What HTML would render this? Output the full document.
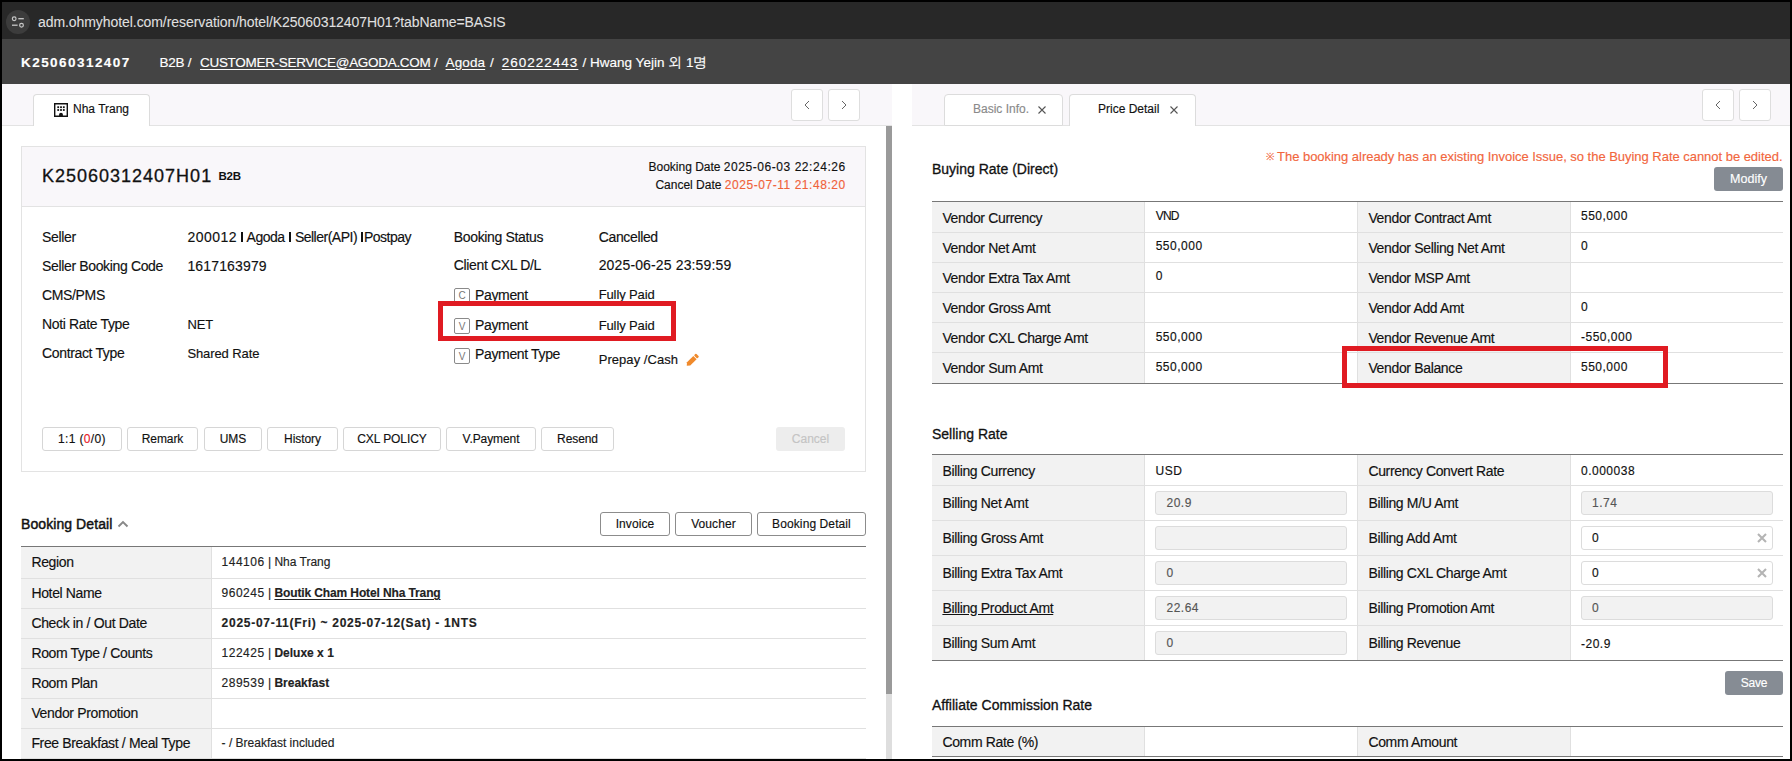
<!DOCTYPE html><html><head><meta charset="utf-8"><style>
*{margin:0;padding:0;box-sizing:border-box}
html,body{width:1792px;height:761px;overflow:hidden;background:#000}
body{position:relative;font-family:"Liberation Sans",sans-serif;color:#111}
.t{position:absolute;line-height:1;white-space:nowrap;-webkit-text-stroke:0.15px currentColor}
.n{letter-spacing:0.5px}
u{text-decoration:underline;text-underline-offset:2px}
</style></head><body>
<div style="position:absolute;left:2px;top:2px;width:1788px;height:37px;background:#282828"></div>
<div style="position:absolute;left:6px;top:10px;width:24px;height:24px;background:#3c3c3c;border-radius:50%"></div>
<svg style="position:absolute;left:6px;top:10px" width="24" height="24" viewBox="0 0 24 24">
<circle cx="8.2" cy="8.7" r="1.85" fill="none" stroke="#c8c8c8" stroke-width="1.2"/>
<line x1="12.3" y1="8.7" x2="17.8" y2="8.7" stroke="#c8c8c8" stroke-width="1.3"/>
<line x1="6" y1="15.2" x2="11.6" y2="15.2" stroke="#c8c8c8" stroke-width="1.3"/>
<circle cx="15.5" cy="15.2" r="1.85" fill="none" stroke="#c8c8c8" stroke-width="1.2"/>
</svg>
<div class="t" style="left:38px;top:15.15px;font-size:14px;font-weight:400;color:#e0e0e0;letter-spacing:-0.07px;-webkit-text-stroke:0.05px #e0e0e0">adm.ohmyhotel.com/reservation/hotel/K25060312407H01?tabName=BASIS</div>
<div style="position:absolute;left:2px;top:39px;width:1788px;height:45px;background:#444444"></div>
<div class="t" style="left:21px;top:55.57px;font-size:13.5px;font-weight:700;color:#fff;letter-spacing:1.45px;">K25060312407</div>
<div class="t" style="left:159.6px;top:55.57px;font-size:13.5px;font-weight:400;color:#fff;letter-spacing:-0.3px;">B2B /</div>
<div class="t" style="left:200px;top:55.57px;font-size:13.5px;font-weight:400;color:#fff;letter-spacing:-0.3px;"><u>CUSTOMER-SERVICE@AGODA.COM</u></div>
<div class="t" style="left:434px;top:55.57px;font-size:13.5px;font-weight:400;color:#fff;letter-spacing:-0.3px;">/</div>
<div class="t" style="left:445.6px;top:55.57px;font-size:13.5px;font-weight:400;color:#fff;letter-spacing:0.1px;"><u>Agoda</u></div>
<div class="t" style="left:490px;top:55.57px;font-size:13.5px;font-weight:400;color:#fff;letter-spacing:-0.3px;">/</div>
<div class="t" style="left:501.8px;top:55.57px;font-size:13.5px;font-weight:400;color:#fff;letter-spacing:1.0px;"><u>260222443</u></div>
<div class="t" style="left:582.6px;top:55.57px;font-size:13.5px;font-weight:400;color:#fff;">/ Hwang Yejin 외 1명</div>
<div style="position:absolute;left:2px;top:84px;width:1788px;height:675px;background:#fff"></div>
<div style="position:absolute;left:2px;top:84px;width:890px;height:42px;background:#f9f7fa;border-bottom:1px solid #e3e3e3"></div>
<div style="position:absolute;left:33px;top:94px;width:117px;height:32px;background:#fff;border:1px solid #dcdcdc;border-bottom:none;border-radius:4px 4px 0 0"></div>
<svg style="position:absolute;left:54px;top:103px" width="14" height="14" viewBox="0 0 14 14">
<path d="M0 0H14V14H0Z M1.4 1.4V12.6H5.1V11.6A1.9 1.9 0 0 1 8.9 11.6V12.6H12.6V1.4Z" fill="#111" fill-rule="evenodd"/>
<rect x="3.3" y="3.3" width="1.8" height="1.8" fill="#111"/><rect x="6.1" y="3.3" width="1.8" height="1.8" fill="#111"/><rect x="8.9" y="3.3" width="1.8" height="1.8" fill="#111"/>
<rect x="3.3" y="6.1" width="1.8" height="1.8" fill="#111"/><rect x="6.1" y="6.1" width="1.8" height="1.8" fill="#111"/><rect x="8.9" y="6.1" width="1.8" height="1.8" fill="#111"/>
</svg>
<div class="t" style="left:73px;top:102.84px;font-size:12px;font-weight:400;color:#111;">Nha Trang</div>
<div style="position:absolute;left:791px;top:89px;width:32px;height:32px;background:#fff;border:1px solid #dedede;border-radius:3px"></div>
<svg style="position:absolute;left:0;top:0" width="1792" height="761"><path d="M809.0 101.0 L805.0 105.0 L809.0 109.0" fill="none" stroke="#666" stroke-width="1"/></svg>
<div style="position:absolute;left:828px;top:89px;width:32px;height:32px;background:#fff;border:1px solid #dedede;border-radius:3px"></div>
<svg style="position:absolute;left:0;top:0" width="1792" height="761"><path d="M842.0 101.0 L846.0 105.0 L842.0 109.0" fill="none" stroke="#666" stroke-width="1"/></svg>
<div style="position:absolute;left:886px;top:126px;width:6px;height:568px;background:#9a9a9a"></div>
<div style="position:absolute;left:886px;top:694px;width:6px;height:65px;background:#dedede"></div>
<div style="position:absolute;left:21px;top:146px;width:845px;height:326px;border:1px solid #e3e3e3;background:#fff"></div>
<div style="position:absolute;left:22px;top:147px;width:843px;height:60px;background:#f9f7fa;border-bottom:1px solid #e3e3e3"></div>
<div class="t" style="left:42px;top:166.76px;font-size:18px;font-weight:400;color:#111;letter-spacing:1.0px;-webkit-text-stroke:0.3px #111">K25060312407H01</div>
<div class="t" style="left:218.5px;top:170.57px;font-size:11.5px;font-weight:700;color:#111;letter-spacing:-0.2px;-webkit-text-stroke:0px">B2B</div>
<div class="t" style="right:946.8px;top:161.14px;font-size:12px;font-weight:400;color:#111;">Booking Date <span style="letter-spacing:0.55px">2025-06-03 22:24:2</span>6</div>
<div class="t" style="right:946.8px;top:179.24px;font-size:12px;font-weight:400;color:#111;">Cancel Date <span style="color:#f0623a"><span style="letter-spacing:0.55px">2025-07-11 21:48:2</span>0</span></div>
<div class="t" style="left:42px;top:229.85px;font-size:14px;font-weight:400;color:#111;letter-spacing:-0.35px;">Seller</div>
<div class="t" style="left:187.4px;top:229.85px;font-size:14px;font-weight:400;color:#111;letter-spacing:-0.5px;"><span style="letter-spacing:0.5px">200012</span> <span style="display:inline-block;width:2px;height:10px;margin:0 1.5px 0 0;background:#111;vertical-align:baseline"></span> Agoda <span style="display:inline-block;width:2px;height:10px;margin:0 0.5px 0 1px;background:#111;vertical-align:baseline"></span> Seller(API) <span style="display:inline-block;width:2px;height:10px;margin:0 0.5px 0 1px;background:#111;vertical-align:baseline"></span>Postpay</div>
<div class="t" style="left:42px;top:258.85px;font-size:14px;font-weight:400;color:#111;letter-spacing:-0.35px;">Seller Booking Code</div>
<div class="t" style="left:187.4px;top:258.85px;font-size:14px;font-weight:400;color:#111;letter-spacing:-0.35px;"><span style="letter-spacing:0.15px">1617163979</span></div>
<div class="t" style="left:42px;top:287.85px;font-size:14px;font-weight:400;color:#111;letter-spacing:-0.35px;">CMS/PMS</div>
<div class="t" style="left:42px;top:316.85px;font-size:14px;font-weight:400;color:#111;letter-spacing:-0.35px;">Noti Rate Type</div>
<div class="t" style="left:187.4px;top:317.70px;font-size:13px;font-weight:400;color:#111;letter-spacing:-0.1px;">NET</div>
<div class="t" style="left:42px;top:345.85px;font-size:14px;font-weight:400;color:#111;letter-spacing:-0.35px;">Contract Type</div>
<div class="t" style="left:187.4px;top:346.70px;font-size:13px;font-weight:400;color:#111;letter-spacing:-0.1px;">Shared Rate</div>
<div class="t" style="left:453.8px;top:229.55px;font-size:14px;font-weight:400;color:#111;letter-spacing:-0.35px;">Booking Status</div>
<div class="t" style="left:598.7px;top:229.55px;font-size:14px;font-weight:400;color:#111;letter-spacing:-0.35px;">Cancelled</div>
<div class="t" style="left:453.8px;top:258.35px;font-size:14px;font-weight:400;color:#111;letter-spacing:-0.35px;">Client CXL D/L</div>
<div class="t" style="left:598.7px;top:258.35px;font-size:14px;font-weight:400;color:#111;letter-spacing:0.14px;">2025-06-25 23:59:59</div>
<div style="position:absolute;left:454px;top:288px;width:16px;height:16px;border:1px solid #8a8a8a;border-radius:2px;background:#fff"></div>
<div class="t" style="left:454px;top:290.8px;width:16px;text-align:center;font-size:10px;color:#777;-webkit-text-stroke:0">C</div>
<div style="position:absolute;left:454px;top:318px;width:16px;height:16px;border:1px solid #8a8a8a;border-radius:2px;background:#fff"></div>
<div class="t" style="left:454px;top:322px;width:16px;text-align:center;font-size:10px;color:#777;-webkit-text-stroke:0">V</div>
<div style="position:absolute;left:454px;top:348px;width:16px;height:16px;border:1px solid #8a8a8a;border-radius:2px;background:#fff"></div>
<div class="t" style="left:454px;top:352px;width:16px;text-align:center;font-size:10px;color:#777;-webkit-text-stroke:0">V</div>
<div class="t" style="left:475px;top:288.45px;font-size:14px;font-weight:400;color:#111;letter-spacing:-0.35px;">Payment</div>
<div class="t" style="left:475px;top:317.75px;font-size:14px;font-weight:400;color:#111;letter-spacing:-0.35px;">Payment</div>
<div class="t" style="left:475px;top:347.15px;font-size:14px;font-weight:400;color:#111;letter-spacing:-0.35px;">Payment Type</div>
<div class="t" style="left:598.7px;top:287.90px;font-size:13px;font-weight:400;color:#111;letter-spacing:-0.12px;">Fully Paid</div>
<div class="t" style="left:598.7px;top:318.60px;font-size:13px;font-weight:400;color:#111;letter-spacing:-0.12px;">Fully Paid</div>
<div class="t" style="left:598.7px;top:352.80px;font-size:13px;font-weight:400;color:#111;letter-spacing:0.05px;">Prepay /Cash</div>
<svg style="position:absolute;left:684px;top:353px" width="16" height="15" viewBox="0 0 16 15">
<g transform="rotate(-45 8 7.5)"><path d="M0.6 7.5 L3.2 5.2 H12.2 V9.8 H3.2 Z" fill="#f08a2c"/><rect x="13" y="5.2" width="2.8" height="4.6" rx="0.9" fill="#f08a2c"/></g>
</svg>
<div style="position:absolute;left:42px;top:427px;width:80px;height:24px;border:1px solid #d6d6d6;border-radius:3px;background:#fff"></div>
<div class="t" style="left:42.0px;width:80px;text-align:center;top:433.04px;font-size:12px;font-weight:400;color:#111;letter-spacing:-0.08px;"><span style="letter-spacing:0.35px">1:1 (<span style="color:#e8202a">0</span>/0)</span></div>
<div style="position:absolute;left:127px;top:427px;width:71px;height:24px;border:1px solid #d6d6d6;border-radius:3px;background:#fff"></div>
<div class="t" style="left:127.0px;width:71px;text-align:center;top:433.04px;font-size:12px;font-weight:400;color:#111;letter-spacing:-0.08px;">Remark</div>
<div style="position:absolute;left:204px;top:427px;width:58px;height:24px;border:1px solid #d6d6d6;border-radius:3px;background:#fff"></div>
<div class="t" style="left:204.0px;width:58px;text-align:center;top:433.04px;font-size:12px;font-weight:400;color:#111;letter-spacing:-0.08px;">UMS</div>
<div style="position:absolute;left:267px;top:427px;width:71px;height:24px;border:1px solid #d6d6d6;border-radius:3px;background:#fff"></div>
<div class="t" style="left:267.0px;width:71px;text-align:center;top:433.04px;font-size:12px;font-weight:400;color:#111;letter-spacing:-0.08px;">History</div>
<div style="position:absolute;left:343px;top:427px;width:98px;height:24px;border:1px solid #d6d6d6;border-radius:3px;background:#fff"></div>
<div class="t" style="left:343.0px;width:98px;text-align:center;top:433.04px;font-size:12px;font-weight:400;color:#111;letter-spacing:-0.08px;">CXL POLICY</div>
<div style="position:absolute;left:446px;top:427px;width:90px;height:24px;border:1px solid #d6d6d6;border-radius:3px;background:#fff"></div>
<div class="t" style="left:446.0px;width:90px;text-align:center;top:433.04px;font-size:12px;font-weight:400;color:#111;letter-spacing:-0.08px;">V.Payment</div>
<div style="position:absolute;left:541px;top:427px;width:73px;height:24px;border:1px solid #d6d6d6;border-radius:3px;background:#fff"></div>
<div class="t" style="left:541.0px;width:73px;text-align:center;top:433.04px;font-size:12px;font-weight:400;color:#111;letter-spacing:-0.08px;">Resend</div>
<div style="position:absolute;left:776px;top:427px;width:69px;height:24px;background:#ededed;border-radius:3px"></div>
<div class="t" style="left:776.0px;width:69px;text-align:center;top:433.04px;font-size:12px;font-weight:400;color:#c4c4c4;">Cancel</div>
<div class="t" style="left:21px;top:517.15px;font-size:14px;font-weight:400;color:#111;letter-spacing:0.08px;-webkit-text-stroke:0.45px #111">Booking Detail</div>
<svg style="position:absolute;left:117px;top:519px" width="12" height="10" viewBox="0 0 12 10"><path d="M1.5 7.5 L6 3 L10.5 7.5" fill="none" stroke="#888" stroke-width="1.9"/></svg>
<div style="position:absolute;left:600px;top:512px;width:70px;height:24px;border:1px solid #8c8c8c;border-radius:3px;background:#fff"></div>
<div class="t" style="left:600.0px;width:70px;text-align:center;top:518.14px;font-size:12px;font-weight:400;color:#111;letter-spacing:0.1px;">Invoice</div>
<div style="position:absolute;left:675px;top:512px;width:77px;height:24px;border:1px solid #8c8c8c;border-radius:3px;background:#fff"></div>
<div class="t" style="left:675.0px;width:77px;text-align:center;top:518.14px;font-size:12px;font-weight:400;color:#111;letter-spacing:0.1px;">Voucher</div>
<div style="position:absolute;left:757px;top:512px;width:109px;height:24px;border:1px solid #8c8c8c;border-radius:3px;background:#fff"></div>
<div class="t" style="left:757.0px;width:109px;text-align:center;top:518.14px;font-size:12px;font-weight:400;color:#111;letter-spacing:0.1px;">Booking Detail</div>
<div style="position:absolute;left:21px;top:546px;width:845px;height:1px;background:#777"></div>
<div style="position:absolute;left:21px;top:547px;width:190px;height:32px;background:#f2f2f2"></div>
<div style="position:absolute;left:21px;top:578px;width:845px;height:1px;background:#e0e0e0"></div>
<div style="position:absolute;left:21px;top:579px;width:190px;height:30px;background:#f2f2f2"></div>
<div style="position:absolute;left:21px;top:608px;width:845px;height:1px;background:#e0e0e0"></div>
<div style="position:absolute;left:21px;top:609px;width:190px;height:30px;background:#f2f2f2"></div>
<div style="position:absolute;left:21px;top:638px;width:845px;height:1px;background:#e0e0e0"></div>
<div style="position:absolute;left:21px;top:639px;width:190px;height:30px;background:#f2f2f2"></div>
<div style="position:absolute;left:21px;top:668px;width:845px;height:1px;background:#e0e0e0"></div>
<div style="position:absolute;left:21px;top:669px;width:190px;height:30px;background:#f2f2f2"></div>
<div style="position:absolute;left:21px;top:698px;width:845px;height:1px;background:#e0e0e0"></div>
<div style="position:absolute;left:21px;top:699px;width:190px;height:30px;background:#f2f2f2"></div>
<div style="position:absolute;left:21px;top:728px;width:845px;height:1px;background:#e0e0e0"></div>
<div style="position:absolute;left:21px;top:729px;width:190px;height:30px;background:#f2f2f2"></div>
<div style="position:absolute;left:211px;top:547px;width:1px;height:212px;background:#e0e0e0"></div>
<div style="position:absolute;left:21px;top:758px;width:845px;height:1px;background:#e0e0e0"></div>
<div class="t" style="left:31.4px;top:554.95px;font-size:14px;font-weight:400;color:#111;letter-spacing:-0.35px;">Region</div>
<div class="t" style="left:221.6px;top:555.64px;font-size:12px;font-weight:400;color:#222;"><span class="n">144106</span> | Nha Trang</div>
<div class="t" style="left:31.4px;top:586.35px;font-size:14px;font-weight:400;color:#111;letter-spacing:-0.35px;">Hotel Name</div>
<div class="t" style="left:221.6px;top:587.04px;font-size:12px;font-weight:400;color:#222;"><span class="n">960245</span> | <b style="letter-spacing:-0.12px"><u>Boutik Cham Hotel Nha Trang</u></b></div>
<div class="t" style="left:31.4px;top:615.85px;font-size:14px;font-weight:400;color:#111;letter-spacing:-0.35px;">Check in / Out Date</div>
<div class="t" style="left:221.6px;top:616.54px;font-size:12px;font-weight:400;color:#222;"><b style="letter-spacing:0.72px">2025-07-11(Fri) ~ 2025-07-12(Sat) - 1NTS</b></div>
<div class="t" style="left:31.4px;top:646.35px;font-size:14px;font-weight:400;color:#111;letter-spacing:-0.35px;">Room Type / Counts</div>
<div class="t" style="left:221.6px;top:647.04px;font-size:12px;font-weight:400;color:#222;"><span class="n">122425</span> | <b>Deluxe x 1</b></div>
<div class="t" style="left:31.4px;top:676.35px;font-size:14px;font-weight:400;color:#111;letter-spacing:-0.35px;">Room Plan</div>
<div class="t" style="left:221.6px;top:677.04px;font-size:12px;font-weight:400;color:#222;"><span class="n">289539</span> | <b>Breakfast</b></div>
<div class="t" style="left:31.4px;top:706.05px;font-size:14px;font-weight:400;color:#111;letter-spacing:-0.35px;">Vendor Promotion</div>
<div class="t" style="left:31.4px;top:735.95px;font-size:14px;font-weight:400;color:#111;letter-spacing:-0.35px;">Free Breakfast / Meal Type</div>
<div class="t" style="left:221.6px;top:736.64px;font-size:12px;font-weight:400;color:#222;">- / Breakfast included</div>
<div style="position:absolute;left:912px;top:84px;width:878px;height:675px;background:#fff"></div>
<div style="position:absolute;left:912px;top:84px;width:878px;height:42px;background:#f9f7fa;border-bottom:1px solid #e3e3e3"></div>
<div style="position:absolute;left:944px;top:94px;width:119px;height:32px;background:#fff;border:1px solid #dcdcdc;border-radius:4px 4px 0 0"></div>
<div class="t" style="left:973px;top:102.84px;font-size:12px;font-weight:400;color:#8a8a8a;">Basic Info.</div>
<svg style="position:absolute;left:1037px;top:105px" width="10" height="10" viewBox="0 0 10 10"><path d="M1.5 1.5 L8.5 8.5 M8.5 1.5 L1.5 8.5" stroke="#555" stroke-width="1.1"/></svg>
<div style="position:absolute;left:1069px;top:94px;width:127px;height:32px;background:#fff;border:1px solid #dcdcdc;border-bottom:none;border-radius:4px 4px 0 0"></div>
<div class="t" style="left:1098px;top:102.84px;font-size:12px;font-weight:400;color:#111;">Price Detail</div>
<svg style="position:absolute;left:1169px;top:105px" width="10" height="10" viewBox="0 0 10 10"><path d="M1.5 1.5 L8.5 8.5 M8.5 1.5 L1.5 8.5" stroke="#555" stroke-width="1.1"/></svg>
<div style="position:absolute;left:1702px;top:89px;width:32px;height:32px;background:#fff;border:1px solid #dedede;border-radius:3px"></div>
<svg style="position:absolute;left:0;top:0" width="1792" height="761"><path d="M1720.0 101.0 L1716.0 105.0 L1720.0 109.0" fill="none" stroke="#666" stroke-width="1"/></svg>
<div style="position:absolute;left:1739px;top:89px;width:32px;height:32px;background:#fff;border:1px solid #dedede;border-radius:3px"></div>
<svg style="position:absolute;left:0;top:0" width="1792" height="761"><path d="M1753.0 101.0 L1757.0 105.0 L1753.0 109.0" fill="none" stroke="#666" stroke-width="1"/></svg>
<div class="t" style="left:932px;top:161.55px;font-size:14px;font-weight:400;color:#111;-webkit-text-stroke:0.3px #111">Buying Rate (Direct)</div>
<div class="t" style="right:9.5px;top:149.80px;font-size:13px;font-weight:400;color:#f2663d;letter-spacing:-0.03px;"><span style="font-size:10px;vertical-align:1px">※</span> The booking already has an existing Invoice Issue, so the Buying Rate cannot be edited.</div>
<div style="position:absolute;left:1714px;top:167px;width:69px;height:24px;background:#858b93;border-radius:3px"></div>
<div class="t" style="left:1714.0px;width:69px;text-align:center;top:172.92px;font-size:12.5px;font-weight:400;color:#fff;">Modify</div>
<div style="position:absolute;left:932px;top:201px;width:851px;height:1px;background:#777"></div>
<div style="position:absolute;left:932px;top:202px;width:212px;height:31px;background:#f2f2f2"></div>
<div style="position:absolute;left:1358px;top:202px;width:213px;height:31px;background:#f2f2f2"></div>
<div style="position:absolute;left:932px;top:232px;width:851px;height:1px;background:#e0e0e0"></div>
<div style="position:absolute;left:932px;top:233px;width:212px;height:30px;background:#f2f2f2"></div>
<div style="position:absolute;left:1358px;top:233px;width:213px;height:30px;background:#f2f2f2"></div>
<div style="position:absolute;left:932px;top:262px;width:851px;height:1px;background:#e0e0e0"></div>
<div style="position:absolute;left:932px;top:263px;width:212px;height:30px;background:#f2f2f2"></div>
<div style="position:absolute;left:1358px;top:263px;width:213px;height:30px;background:#f2f2f2"></div>
<div style="position:absolute;left:932px;top:292px;width:851px;height:1px;background:#e0e0e0"></div>
<div style="position:absolute;left:932px;top:293px;width:212px;height:30px;background:#f2f2f2"></div>
<div style="position:absolute;left:1358px;top:293px;width:213px;height:30px;background:#f2f2f2"></div>
<div style="position:absolute;left:932px;top:322px;width:851px;height:1px;background:#e0e0e0"></div>
<div style="position:absolute;left:932px;top:323px;width:212px;height:30px;background:#f2f2f2"></div>
<div style="position:absolute;left:1358px;top:323px;width:213px;height:30px;background:#f2f2f2"></div>
<div style="position:absolute;left:932px;top:352px;width:851px;height:1px;background:#e0e0e0"></div>
<div style="position:absolute;left:932px;top:353px;width:212px;height:31px;background:#f2f2f2"></div>
<div style="position:absolute;left:1358px;top:353px;width:213px;height:31px;background:#f2f2f2"></div>
<div style="position:absolute;left:932px;top:383px;width:851px;height:1px;background:#777"></div>
<div style="position:absolute;left:1144px;top:202px;width:1px;height:181px;background:#e0e0e0"></div>
<div style="position:absolute;left:1357px;top:202px;width:1px;height:181px;background:#e0e0e0"></div>
<div style="position:absolute;left:1570px;top:202px;width:1px;height:181px;background:#e0e0e0"></div>
<div class="t" style="left:942.4px;top:210.75px;font-size:14px;font-weight:400;color:#111;letter-spacing:-0.35px;">Vendor Currency</div>
<div class="t" style="left:1368.4px;top:210.75px;font-size:14px;font-weight:400;color:#111;letter-spacing:-0.35px;">Vendor Contract Amt</div>
<div class="t" style="left:1155.7px;top:209.94px;font-size:12px;font-weight:400;color:#111;letter-spacing:-0.8px;">VND</div>
<div class="t" style="left:1581px;top:209.94px;font-size:12px;font-weight:400;color:#111;"><span class="n">550,000</span></div>
<div class="t" style="left:942.4px;top:240.75px;font-size:14px;font-weight:400;color:#111;letter-spacing:-0.35px;">Vendor Net Amt</div>
<div class="t" style="left:1368.4px;top:240.75px;font-size:14px;font-weight:400;color:#111;letter-spacing:-0.35px;">Vendor Selling Net Amt</div>
<div class="t" style="left:1155.7px;top:240.19px;font-size:12px;font-weight:400;color:#111;"><span class="n">550,000</span></div>
<div class="t" style="left:1581px;top:240.19px;font-size:12px;font-weight:400;color:#111;"><span class="n">0</span></div>
<div class="t" style="left:942.4px;top:270.75px;font-size:14px;font-weight:400;color:#111;letter-spacing:-0.35px;">Vendor Extra Tax Amt</div>
<div class="t" style="left:1368.4px;top:270.75px;font-size:14px;font-weight:400;color:#111;letter-spacing:-0.35px;">Vendor MSP Amt</div>
<div class="t" style="left:1155.7px;top:270.44px;font-size:12px;font-weight:400;color:#111;"><span class="n">0</span></div>
<div class="t" style="left:942.4px;top:300.75px;font-size:14px;font-weight:400;color:#111;letter-spacing:-0.35px;">Vendor Gross Amt</div>
<div class="t" style="left:1368.4px;top:300.75px;font-size:14px;font-weight:400;color:#111;letter-spacing:-0.35px;">Vendor Add Amt</div>
<div class="t" style="left:1581px;top:300.69px;font-size:12px;font-weight:400;color:#111;"><span class="n">0</span></div>
<div class="t" style="left:942.4px;top:330.75px;font-size:14px;font-weight:400;color:#111;letter-spacing:-0.35px;">Vendor CXL Charge Amt</div>
<div class="t" style="left:1368.4px;top:330.75px;font-size:14px;font-weight:400;color:#111;letter-spacing:-0.35px;">Vendor Revenue Amt</div>
<div class="t" style="left:1155.7px;top:330.94px;font-size:12px;font-weight:400;color:#111;"><span class="n">550,000</span></div>
<div class="t" style="left:1581px;top:330.94px;font-size:12px;font-weight:400;color:#111;"><span class="n">-550,000</span></div>
<div class="t" style="left:942.4px;top:360.75px;font-size:14px;font-weight:400;color:#111;letter-spacing:-0.35px;">Vendor Sum Amt</div>
<div class="t" style="left:1368.4px;top:360.75px;font-size:14px;font-weight:400;color:#111;letter-spacing:-0.35px;">Vendor Balance</div>
<div class="t" style="left:1155.7px;top:361.19px;font-size:12px;font-weight:400;color:#111;"><span class="n">550,000</span></div>
<div class="t" style="left:1581px;top:361.19px;font-size:12px;font-weight:400;color:#111;"><span class="n">550,000</span></div>
<div class="t" style="left:932px;top:427.15px;font-size:14px;font-weight:400;color:#111;-webkit-text-stroke:0.3px #111">Selling Rate</div>
<div style="position:absolute;left:932px;top:454px;width:851px;height:1px;background:#777"></div>
<div style="position:absolute;left:932px;top:455px;width:212px;height:31px;background:#f2f2f2"></div>
<div style="position:absolute;left:1358px;top:455px;width:213px;height:31px;background:#f2f2f2"></div>
<div style="position:absolute;left:932px;top:485px;width:851px;height:1px;background:#e0e0e0"></div>
<div style="position:absolute;left:932px;top:486px;width:212px;height:35px;background:#f2f2f2"></div>
<div style="position:absolute;left:1358px;top:486px;width:213px;height:35px;background:#f2f2f2"></div>
<div style="position:absolute;left:932px;top:520px;width:851px;height:1px;background:#e0e0e0"></div>
<div style="position:absolute;left:932px;top:521px;width:212px;height:35px;background:#f2f2f2"></div>
<div style="position:absolute;left:1358px;top:521px;width:213px;height:35px;background:#f2f2f2"></div>
<div style="position:absolute;left:932px;top:555px;width:851px;height:1px;background:#e0e0e0"></div>
<div style="position:absolute;left:932px;top:556px;width:212px;height:35px;background:#f2f2f2"></div>
<div style="position:absolute;left:1358px;top:556px;width:213px;height:35px;background:#f2f2f2"></div>
<div style="position:absolute;left:932px;top:590px;width:851px;height:1px;background:#e0e0e0"></div>
<div style="position:absolute;left:932px;top:591px;width:212px;height:35px;background:#f2f2f2"></div>
<div style="position:absolute;left:1358px;top:591px;width:213px;height:35px;background:#f2f2f2"></div>
<div style="position:absolute;left:932px;top:625px;width:851px;height:1px;background:#e0e0e0"></div>
<div style="position:absolute;left:932px;top:626px;width:212px;height:35px;background:#f2f2f2"></div>
<div style="position:absolute;left:1358px;top:626px;width:213px;height:35px;background:#f2f2f2"></div>
<div style="position:absolute;left:932px;top:660px;width:851px;height:1px;background:#777"></div>
<div style="position:absolute;left:1144px;top:455px;width:1px;height:205px;background:#e0e0e0"></div>
<div style="position:absolute;left:1357px;top:455px;width:1px;height:205px;background:#e0e0e0"></div>
<div style="position:absolute;left:1570px;top:455px;width:1px;height:205px;background:#e0e0e0"></div>
<div class="t" style="left:942.4px;top:463.65px;font-size:14px;font-weight:400;color:#111;letter-spacing:-0.35px;">Billing Currency</div>
<div class="t" style="left:1368.4px;top:463.65px;font-size:14px;font-weight:400;color:#111;letter-spacing:-0.35px;">Currency Convert Rate</div>
<div class="t" style="left:1155.5px;top:464.84px;font-size:12px;font-weight:400;color:#111;"><span class="n">USD</span></div>
<div class="t" style="left:1581px;top:464.84px;font-size:12px;font-weight:400;color:#111;"><span class="n">0.000038</span></div>
<div class="t" style="left:942.4px;top:495.65px;font-size:14px;font-weight:400;color:#111;letter-spacing:-0.35px;">Billing Net Amt</div>
<div class="t" style="left:1368.4px;top:495.65px;font-size:14px;font-weight:400;color:#111;letter-spacing:-0.35px;">Billing M/U Amt</div>
<div style="position:absolute;left:1155.0px;top:491px;width:192px;height:24px;background:#f2f2f2;border:1px solid #dcdcdc;border-radius:3px"></div>
<div class="t" style="left:1166.5px;top:496.84px;font-size:12px;font-weight:400;color:#555;"><span class="n">20.9</span></div>
<div style="position:absolute;left:1580.5px;top:491px;width:192px;height:24px;background:#f2f2f2;border:1px solid #dcdcdc;border-radius:3px"></div>
<div class="t" style="left:1592px;top:496.84px;font-size:12px;font-weight:400;color:#555;"><span class="n">1.74</span></div>
<div class="t" style="left:942.4px;top:530.65px;font-size:14px;font-weight:400;color:#111;letter-spacing:-0.35px;">Billing Gross Amt</div>
<div class="t" style="left:1368.4px;top:530.65px;font-size:14px;font-weight:400;color:#111;letter-spacing:-0.35px;">Billing Add Amt</div>
<div style="position:absolute;left:1155.0px;top:526px;width:192px;height:24px;background:#f2f2f2;border:1px solid #dcdcdc;border-radius:3px"></div>
<div style="position:absolute;left:1580.5px;top:526px;width:192px;height:24px;background:#fff;border:1px solid #dcdcdc;border-radius:3px"></div>
<div class="t" style="left:1592px;top:531.84px;font-size:12px;font-weight:400;color:#111;"><span class="n">0</span></div>
<svg style="position:absolute;left:1757px;top:533px" width="10" height="10" viewBox="0 0 10 10"><path d="M1 1 L9 9 M9 1 L1 9" stroke="#b4b4b4" stroke-width="2.1"/></svg>
<div class="t" style="left:942.4px;top:565.65px;font-size:14px;font-weight:400;color:#111;letter-spacing:-0.35px;">Billing Extra Tax Amt</div>
<div class="t" style="left:1368.4px;top:565.65px;font-size:14px;font-weight:400;color:#111;letter-spacing:-0.35px;">Billing CXL Charge Amt</div>
<div style="position:absolute;left:1155.0px;top:561px;width:192px;height:24px;background:#f2f2f2;border:1px solid #dcdcdc;border-radius:3px"></div>
<div class="t" style="left:1166.5px;top:566.84px;font-size:12px;font-weight:400;color:#555;"><span class="n">0</span></div>
<div style="position:absolute;left:1580.5px;top:561px;width:192px;height:24px;background:#fff;border:1px solid #dcdcdc;border-radius:3px"></div>
<div class="t" style="left:1592px;top:566.84px;font-size:12px;font-weight:400;color:#111;"><span class="n">0</span></div>
<svg style="position:absolute;left:1757px;top:568px" width="10" height="10" viewBox="0 0 10 10"><path d="M1 1 L9 9 M9 1 L1 9" stroke="#b4b4b4" stroke-width="2.1"/></svg>
<div class="t" style="left:942.4px;top:600.65px;font-size:14px;font-weight:400;color:#111;letter-spacing:-0.35px;"><u style="text-underline-offset:1px">Billing Product Amt</u></div>
<div class="t" style="left:1368.4px;top:600.65px;font-size:14px;font-weight:400;color:#111;letter-spacing:-0.35px;">Billing Promotion Amt</div>
<div style="position:absolute;left:1155.0px;top:596px;width:192px;height:24px;background:#f2f2f2;border:1px solid #dcdcdc;border-radius:3px"></div>
<div class="t" style="left:1166.5px;top:601.84px;font-size:12px;font-weight:400;color:#555;"><span class="n">22.64</span></div>
<div style="position:absolute;left:1580.5px;top:596px;width:192px;height:24px;background:#f2f2f2;border:1px solid #dcdcdc;border-radius:3px"></div>
<div class="t" style="left:1592px;top:601.84px;font-size:12px;font-weight:400;color:#555;"><span class="n">0</span></div>
<div class="t" style="left:942.4px;top:635.65px;font-size:14px;font-weight:400;color:#111;letter-spacing:-0.35px;">Billing Sum Amt</div>
<div class="t" style="left:1368.4px;top:635.65px;font-size:14px;font-weight:400;color:#111;letter-spacing:-0.35px;">Billing Revenue</div>
<div style="position:absolute;left:1155.0px;top:631px;width:192px;height:24px;background:#f2f2f2;border:1px solid #dcdcdc;border-radius:3px"></div>
<div class="t" style="left:1166.5px;top:636.84px;font-size:12px;font-weight:400;color:#555;"><span class="n">0</span></div>
<div class="t" style="left:1581px;top:637.84px;font-size:12px;font-weight:400;color:#111;"><span class="n">-20.9</span></div>
<div style="position:absolute;left:1725px;top:671px;width:58px;height:24px;background:#868c94;border-radius:3px"></div>
<div class="t" style="left:1725.0px;width:58px;text-align:center;top:677.34px;font-size:12px;font-weight:400;color:#fff;letter-spacing:-0.2px;">Save</div>
<div class="t" style="left:932px;top:698.15px;font-size:14px;font-weight:400;color:#111;-webkit-text-stroke:0.3px #111">Affiliate Commission Rate</div>
<div style="position:absolute;left:932px;top:726px;width:851px;height:1px;background:#777"></div>
<div style="position:absolute;left:932px;top:727px;width:212px;height:30px;background:#f2f2f2"></div>
<div style="position:absolute;left:1358px;top:727px;width:213px;height:30px;background:#f2f2f2"></div>
<div style="position:absolute;left:932px;top:756px;width:851px;height:1px;background:#777"></div>
<div style="position:absolute;left:1144px;top:727px;width:1px;height:29px;background:#e0e0e0"></div>
<div style="position:absolute;left:1357px;top:727px;width:1px;height:29px;background:#e0e0e0"></div>
<div style="position:absolute;left:1570px;top:727px;width:1px;height:29px;background:#e0e0e0"></div>
<div class="t" style="left:942.4px;top:735.15px;font-size:14px;font-weight:400;color:#111;letter-spacing:-0.35px;">Comm Rate (%)</div>
<div class="t" style="left:1368.4px;top:735.15px;font-size:14px;font-weight:400;color:#111;letter-spacing:-0.35px;">Comm Amount</div>
<div style="position:absolute;left:438px;top:301px;width:238px;height:40px;border:5px solid #e01b22"></div>
<div style="position:absolute;left:1342px;top:346px;width:326px;height:42px;border:5px solid #e01b22"></div>
</body></html>
